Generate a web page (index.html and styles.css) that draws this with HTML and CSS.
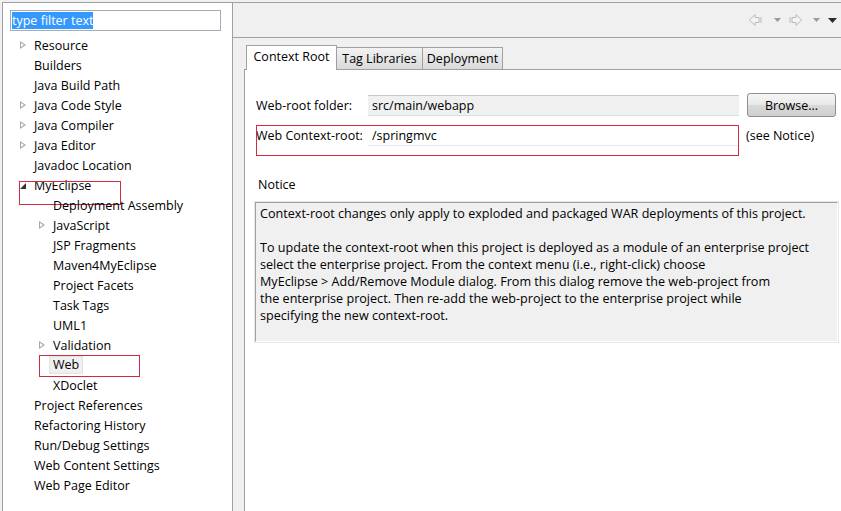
FILE: index.html
```html
<!DOCTYPE html>
<html>
<head>
  <title>Properties for springmvc</title>
  <link rel="stylesheet" href="styles.css">
</head>
<body>
  <div class="window">

    <!-- Left: property page tree -->
    <div class="sidebar">
      <div class="filter"><span class="sel">type filter text</span></div>
      <ul class="tree">
        <li class="lvl1"><span class="twisty closed"></span>Resource</li>
        <li class="lvl1"><span class="twisty"></span>Builders</li>
        <li class="lvl1"><span class="twisty"></span>Java Build Path</li>
        <li class="lvl1"><span class="twisty closed"></span>Java Code Style</li>
        <li class="lvl1"><span class="twisty closed"></span>Java Compiler</li>
        <li class="lvl1"><span class="twisty closed"></span>Java Editor</li>
        <li class="lvl1"><span class="twisty"></span>Javadoc Location</li>
        <li class="lvl1"><span class="twisty open"></span>MyEclipse<span class="mark mark-myeclipse"></span></li>
        <li class="lvl2"><span class="twisty"></span>Deployment Assembly</li>
        <li class="lvl2"><span class="twisty closed"></span>JavaScript</li>
        <li class="lvl2"><span class="twisty"></span>JSP Fragments</li>
        <li class="lvl2"><span class="twisty"></span>Maven4MyEclipse</li>
        <li class="lvl2"><span class="twisty"></span>Project Facets</li>
        <li class="lvl2"><span class="twisty"></span>Task Tags</li>
        <li class="lvl2"><span class="twisty"></span>UML1</li>
        <li class="lvl2"><span class="twisty closed"></span>Validation</li>
        <li class="lvl2"><span class="twisty"></span><span class="selected">Web</span><span class="mark mark-web"></span></li>
        <li class="lvl2"><span class="twisty"></span>XDoclet</li>
        <li class="lvl1"><span class="twisty"></span>Project References</li>
        <li class="lvl1"><span class="twisty"></span>Refactoring History</li>
        <li class="lvl1"><span class="twisty"></span>Run/Debug Settings</li>
        <li class="lvl1"><span class="twisty"></span>Web Content Settings</li>
        <li class="lvl1"><span class="twisty"></span>Web Page Editor</li>
      </ul>
    </div>

    <!-- Right: page header and tab folder -->
    <div class="main">
      <div class="toolbar">
        <svg class="nav" width="16" height="14" viewBox="0 0 16 14">
          <path d="M1.5 7 L7 1.5 V4.5 H11 V9.5 H7 V12.5 Z M13 4 V10" fill="#f4f4f4" stroke="#b9b9b9" stroke-width="1"/>
        </svg>
        <svg class="drop" width="7" height="4" viewBox="0 0 7 4"><path d="M0 0 H7 L3.5 4 Z" fill="#9a9a9a"/></svg>
        <svg class="nav" width="16" height="14" viewBox="0 0 16 14">
          <path d="M14.5 7 L9 1.5 V4.5 H5 V9.5 H9 V12.5 Z M3 4 V10" fill="#f4f4f4" stroke="#b9b9b9" stroke-width="1"/>
        </svg>
        <svg class="drop" width="7" height="4" viewBox="0 0 7 4"><path d="M0 0 H7 L3.5 4 Z" fill="#9a9a9a"/></svg>
        <svg class="menu" width="9" height="5" viewBox="0 0 9 5"><path d="M0 0 H9 L4.5 5 Z" fill="#2b2b2b"/></svg>
      </div>

      <div class="folder">
        <div class="tabs">
          <div class="tab active">Context Root</div>
          <div class="tab tab-tags">Tag Libraries</div>
          <div class="tab tab-deploy">Deployment</div>
        </div>
        <div class="panel">
          <div class="row">
            <span class="label">Web-root folder:</span>
            <div class="field disabled">src/main/webapp</div>
            <button class="browse">Browse...</button>
          </div>
          <div class="row row-context">
            <span class="label">Web Context-root:</span>
            <div class="field">/springmvc</div>
            <span class="hint">(see Notice)</span>
            <span class="mark mark-context"></span>
          </div>

          <div class="notice-title">Notice</div>
          <div class="notice">
            Context-root changes only apply to exploded and packaged WAR deployments of this project.<br>
            <br>
            To update the context-root when this project is deployed as a module of an enterprise project<br>
            select the enterprise project. From the context menu (i.e., right-click) choose<br>
            MyEclipse &gt; Add/Remove Module dialog. From this dialog remove the web-project from<br>
            the enterprise project. Then re-add the web-project to the enterprise project while<br>
            specifying the new context-root.
          </div>
        </div>
      </div>
    </div>

  </div>
</body>
</html>
```

FILE: styles.css
```css
body {
    margin: 0;
    font-family: "Open Sans", "Noto Sans", sans-serif;
    font-size: 12px;
    color: #000;
}
.window {
    display: flex;
    height: 511px;
    box-sizing: border-box;
    padding: 2px 0 0 2px;
    background: #f0f0f0;
    overflow: hidden;
}

/* left tree */
.sidebar {
    position: relative;
    width: 231px;
    box-sizing: border-box;
    border: 1px solid #a0a0a0;
    border-bottom: none;
    background: #fff;
}
.filter {
    margin: 7px 0 0 7px;
    width: 211px;
    height: 21px;
    box-sizing: border-box;
    border: 1px solid #a5acb5;
    padding: 1px 1px;
    line-height: 17px;
}
.sel {
    display: inline-block;
    background: #3399ff;
    color: #fff;
    height: 17px;
    font-size: 12.5px;
}
.tree {
    list-style: none;
    margin: 4px 0 0;
    padding: 0;
}
.tree li {
    position: relative;
    display: flex;
    align-items: center;
    height: 20px;
    font-size: 12.5px;
    white-space: nowrap;
}
.tree .lvl1 {
    padding-left: 17px;
}
.tree .lvl2 {
    padding-left: 36px;
}
.twisty {
    width: 14px;
    height: 20px;
    flex: none;
    position: relative;
}
.twisty.closed::before {
    content: "";
    position: absolute;
    left: 0;
    top: 6px;
    border-left: 6px solid #a8a8a8;
    border-top: 4px solid transparent;
    border-bottom: 4px solid transparent;
}
.twisty.closed::after {
    content: "";
    position: absolute;
    left: 1px;
    top: 8px;
    border-left: 3px solid #fff;
    border-top: 2px solid transparent;
    border-bottom: 2px solid transparent;
}
.twisty.open::before {
    content: "";
    position: absolute;
    left: 0;
    top: 8px;
    border-right: 6px solid #333;
    border-top: 6px solid transparent;
}
.selected {
    background: #f0f0f0;
    border: 1px solid #e2e2e2;
    padding: 0 3px;
    margin-left: -4px;
    line-height: 16px;
}

/* red annotation boxes */
.mark {
    position: absolute;
    border: 1px solid #d22b3d;
}
.mark-myeclipse {
    left: 16px;
    top: 6px;
    width: 100px;
    height: 22px;
}
.mark-web {
    left: 36px;
    top: 0;
    width: 99px;
    height: 20px;
}
.mark-context {
    left: 1px;
    top: 1px;
    width: 481px;
    height: 29px;
}

/* right side */
.main {
    flex: 1;
    display: flex;
    flex-direction: column;
    border-top: 1px solid #a0a0a0;
}
.toolbar {
    height: 34px;
    border-bottom: 1px solid #a0a0a0;
    display: flex;
    align-items: center;
    justify-content: flex-end;
    padding-right: 4px;
}
.toolbar .nav {
    margin-left: 6px;
}
.toolbar .drop {
    margin-left: 10px;
}
.toolbar .menu {
    margin-left: 8px;
}
.folder {
    flex: 1;
    display: flex;
    flex-direction: column;
    margin: 7px 0 0 11px;
}
.tabs {
    display: flex;
    align-items: flex-end;
    padding-left: 2px;
    height: 24px;
}
.tab {
    box-sizing: border-box;
    height: 22px;
    border: 1px solid #a0a0a0;
    border-bottom: none;
    border-left: none;
    background: linear-gradient(#f2f2f2, #dadada);
    text-align: center;
    line-height: 21px;
    font-size: 12.5px;
}
.tab.active {
    height: 25px;
    width: 91px;
    border-left: 1px solid #a0a0a0;
    background: #fff;
    margin-bottom: -1px;
    line-height: 22px;
    position: relative;
}
.tab-tags {
    width: 86px;
}
.tab-deploy {
    width: 80px;
}
.panel {
    flex: 1;
    background: #fff;
    border-top: 1px solid #a0a0a0;
    border-left: 1px solid #a0a0a0;
    padding: 23px 3px 0 10px;
}
.row {
    position: relative;
    display: flex;
    align-items: center;
    height: 24px;
    padding-left: 1px;
}
.row-context {
    margin-top: 7px;
    height: 22px;
}
.label {
    width: 112px;
    flex: none;
    font-size: 12.5px;
}
.field {
    width: 371px;
    height: 21px;
    box-sizing: border-box;
    border-top: 1px solid #c9c9c9;
    border-bottom: 1px solid #e3e9ef;
    padding-left: 4px;
    line-height: 19px;
    font-size: 12.5px;
}
.field.disabled {
    background: #f0f0f0;
    border-bottom-color: #d6e6d6;
}
.browse {
    margin-left: 8px;
    width: 89px;
    height: 24px;
    border: 1px solid #8e8f8f;
    border-radius: 3px;
    background: linear-gradient(#f6f6f6 0%, #e8e8e8 50%, #d9d9d9 51%, #cfcfcf 100%);
    font-family: inherit;
    font-size: 12.5px;
    padding: 0;
}
.hint {
    margin-left: 7px;
    font-size: 12.5px;
}
.notice-title {
    margin: 30px 0 0 3px;
    height: 18px;
    line-height: 18px;
    font-size: 12.5px;
}
.notice {
    margin-top: 8px;
    height: 140px;
    box-sizing: border-box;
    border: 1px solid;
    border-color: #a0a0a0 #fff #fff #a0a0a0;
    box-shadow: 0 0 0 1px #e6e6e6;
    background: #f0f0f0;
    padding: 2px 4px;
    line-height: 17px;
    font-size: 12.6px;
}
```
